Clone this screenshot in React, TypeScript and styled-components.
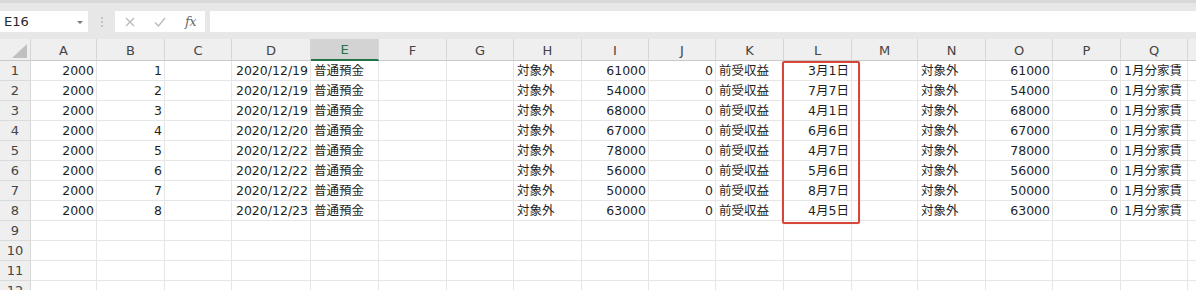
import styled, { createGlobalStyle } from "styled-components";

const GlobalStyle = createGlobalStyle`
  html, body {
    margin: 0;
    padding: 0;
    background: #ffffff;
    overflow: hidden;
  }
`;

const COLUMNS = [
  { key: "A", width: 66 },
  { key: "B", width: 68 },
  { key: "C", width: 67 },
  { key: "D", width: 79 },
  { key: "E", width: 68 },
  { key: "F", width: 68 },
  { key: "G", width: 67 },
  { key: "H", width: 68 },
  { key: "I", width: 67 },
  { key: "J", width: 67 },
  { key: "K", width: 68 },
  { key: "L", width: 68 },
  { key: "M", width: 66 },
  { key: "N", width: 68 },
  { key: "O", width: 67 },
  { key: "P", width: 68 },
  { key: "Q", width: 67 },
  { key: "R", width: 67 },
];

const ROW_COUNT = 12;

// date, amount, due day for each filled row
const entries: [string, string, string][] = [
  ["2020/12/19", "61000", "3月1日"],
  ["2020/12/19", "54000", "7月7日"],
  ["2020/12/19", "68000", "4月1日"],
  ["2020/12/20", "67000", "6月6日"],
  ["2020/12/22", "78000", "4月7日"],
  ["2020/12/22", "56000", "5月6日"],
  ["2020/12/22", "50000", "8月7日"],
  ["2020/12/23", "63000", "4月5日"],
];

type CellValue = { text: string; align: "left" | "right" };

const num = (text: string): CellValue => ({ text, align: "right" });
const str = (text: string): CellValue => ({ text, align: "left" });
const empty: CellValue = { text: "", align: "left" };

const rows: CellValue[][] = Array.from({ length: ROW_COUNT }, (_, i) => {
  const entry = entries[i];
  if (!entry) return COLUMNS.map(() => empty);
  const [date, amount, due] = entry;
  return [
    num("2000"),
    num(String(i + 1)),
    empty,
    num(date),
    str("普通預金"),
    empty,
    empty,
    str("対象外"),
    num(amount),
    num("0"),
    str("前受収益"),
    num(due),
    empty,
    str("対象外"),
    num(amount),
    num("0"),
    str("1月分家賃"),
    empty,
  ];
});

const Page = styled.div`
  width: 1196px;
  height: 290px;
  overflow: hidden;
  display: flex;
  flex-direction: column;
  font-family: "DejaVu Sans", "Noto Sans CJK JP", sans-serif;
`;

const FormulaBar = styled.div`
  height: 39px;
  box-sizing: border-box;
  flex-shrink: 0;
  display: flex;
  align-items: flex-start;
  background: #e7e7e7;
  border-top: 3px solid #d9d9d9;
  padding-top: 8px;
`;

const NameBox = styled.div`
  width: 88px;
  height: 21px;
  box-sizing: border-box;
  background: #ffffff;
  display: flex;
  align-items: center;
  justify-content: space-between;
  padding: 0 5px 0 4px;
  font-size: 13px;
  color: #262626;
`;

const DropArrow = styled.span`
  width: 0;
  height: 0;
  border-left: 3px solid transparent;
  border-right: 3px solid transparent;
  border-top: 3px solid #7a7a7a;
  margin-top: 1px;
`;

const Grip = styled.div`
  width: 27px;
  height: 21px;
  display: flex;
  flex-direction: column;
  align-items: center;
  justify-content: center;
  gap: 2px;
`;

const GripDot = styled.span`
  width: 2px;
  height: 2px;
  background: #c4c4c4;
`;

const FxBox = styled.div`
  width: 90px;
  height: 21px;
  background: #ffffff;
  display: flex;
  align-items: center;
  padding-left: 10px;
  box-sizing: border-box;
  gap: 19px;
`;

const FxLabel = styled.span`
  font-family: "DejaVu Serif", "Liberation Serif", serif;
  font-style: italic;
  font-size: 13px;
  color: #6a6a6a;
  letter-spacing: -0.5px;
`;

const FormulaInput = styled.div`
  flex: 1;
  height: 21px;
  margin-left: 5px;
  background: #ffffff;
`;

const Sheet = styled.div`
  position: relative;
  display: grid;
  grid-template-columns: 31px ${COLUMNS.map((c) => `${c.width}px`).join(" ")};
  grid-template-rows: 22px repeat(${ROW_COUNT}, 20px);
  background: #ffffff;
`;

const CornerCell = styled.div`
  background: #efefef;
  border-right: 1px solid #d6d6d6;
  border-bottom: 1px solid #c9c9c9;
  display: flex;
  align-items: flex-end;
  justify-content: flex-end;
  padding: 0 3px 2px 0;
  box-sizing: border-box;
`;

const CornerTriangle = styled.span`
  width: 15px;
  height: 14px;
  background: #c0c0c0;
  clip-path: polygon(100% 0, 100% 100%, 0 100%);
`;

const ColHeader = styled.div<{ $active?: boolean }>`
  box-sizing: border-box;
  background: ${(p) => (p.$active ? "#d3d3d3" : "#efefef")};
  color: ${(p) => (p.$active ? "#217346" : "#444444")};
  border-right: 1px solid #d6d6d6;
  border-bottom: ${(p) => (p.$active ? "2px solid #217346" : "1px solid #c9c9c9")};
  font-size: 13px;
  display: flex;
  align-items: center;
  justify-content: center;
  padding-top: 1px;
`;

const RowHeader = styled.div`
  box-sizing: border-box;
  background: #efefef;
  color: #444444;
  border-right: 1px solid #d6d6d6;
  border-bottom: 1px solid #dadada;
  font-size: 13px;
  display: flex;
  align-items: center;
  justify-content: center;
`;

const Cell = styled.div<{ $align: "left" | "right" }>`
  box-sizing: border-box;
  border-right: 1px solid #e6e6e6;
  border-bottom: 1px solid #e6e6e6;
  font-size: 12.5px;
  line-height: 19px;
  color: #1f1f1f;
  white-space: nowrap;
  overflow: ${(p) => (p.$align === "left" ? "visible" : "hidden")};
  text-align: ${(p) => p.$align};
  padding: ${(p) => (p.$align === "left" ? "0 0 0 3px" : "0 2px 0 0")};
`;

const Highlight = styled.div`
  position: absolute;
  left: 782px;
  top: 22px;
  width: 78px;
  height: 163px;
  box-sizing: border-box;
  border: 2px solid #d6473a;
  border-radius: 2px;
  box-shadow: 0 0 1px rgba(214, 71, 58, 0.5);
  pointer-events: none;
`;

function CancelIcon() {
  return (
    <svg width="10" height="10" viewBox="0 0 10 10">
      <path d="M1 1 L9 9 M9 1 L1 9" stroke="#b9b9b9" strokeWidth="1.2" fill="none" />
    </svg>
  );
}

function EnterIcon() {
  return (
    <svg width="12" height="10" viewBox="0 0 12 10">
      <path d="M1 5.5 L4.5 9 L11 1" stroke="#b9b9b9" strokeWidth="1.3" fill="none" />
    </svg>
  );
}

export default function App() {
  return (
    <>
      <GlobalStyle />
      <Page>
        <FormulaBar>
          <NameBox>
            E16
            <DropArrow />
          </NameBox>
          <Grip>
            <GripDot />
            <GripDot />
            <GripDot />
          </Grip>
          <FxBox>
            <CancelIcon />
            <EnterIcon />
            <FxLabel>fx</FxLabel>
          </FxBox>
          <FormulaInput />
        </FormulaBar>
        <Sheet>
          <CornerCell>
            <CornerTriangle />
          </CornerCell>
          {COLUMNS.map((c) => (
            <ColHeader key={c.key} $active={c.key === "E"}>
              {c.key}
            </ColHeader>
          ))}
          {rows.map((row, r) => [
            <RowHeader key={`h${r}`}>{r + 1}</RowHeader>,
            ...row.map((cell, c) => (
              <Cell key={`${r}-${c}`} $align={cell.align}>
                {cell.text}
              </Cell>
            )),
          ])}
          <Highlight />
        </Sheet>
      </Page>
    </>
  );
}
